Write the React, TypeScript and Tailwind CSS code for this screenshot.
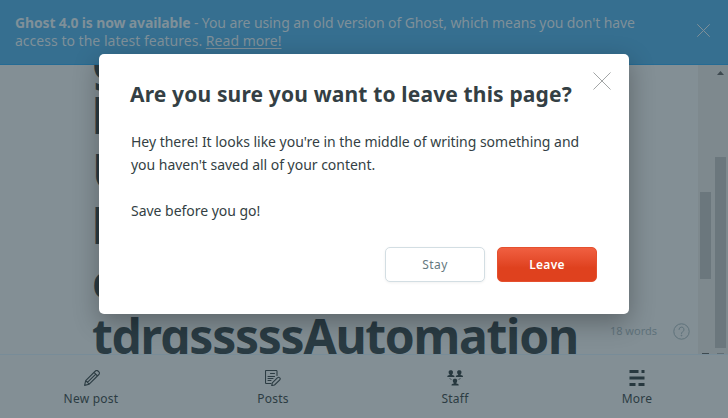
import React from 'react';

const Cross = ({ size, color }: { size: number; color: string }) => (
  <svg width={size} height={size} viewBox="0 0 24 24" fill="none" stroke={color} strokeWidth={24 / size} strokeLinecap="round">
    <path d="M1 1l22 22M23 1L1 23" />
  </svg>
);

const Pencil = () => (
  <svg width="16" height="16" viewBox="0 0 16 16" fill="none" stroke="#2c3c43" strokeWidth="1.1" strokeLinejoin="round" className="translate-x-px">
    <path d="M1.7 10.6L11.4 1a1.8 1.8 0 0 1 2.6 0l.9.9a1.8 1.8 0 0 1 0 2.6L5.2 14.2.6 15.4zM1.7 10.6l3.5 3.6M10 2.4L13.5 6M3.4 12.4L11.8 4.1" />
  </svg>
);

const PostsIcon = () => (
  <svg width="16" height="16" viewBox="0 0 16 16" fill="none" stroke="#2c3c43" strokeWidth="1.1" strokeLinecap="round" strokeLinejoin="round">
    <path d="M6 13.5H1.2a.7.7 0 0 1-.7-.7V1.2a.7.7 0 0 1 .7-.7h10.1a.7.7 0 0 1 .7.7v4.3M5.5 3.5h4M3 6.5h6.5M3 8.5h5M3 10.5h3" />
    <path d="M7.3 12.8l5.3-5.2a1.3 1.3 0 0 1 1.9 0l.3.3a1.3 1.3 0 0 1 0 1.9l-5.3 5.2-2.8.6z" />
  </svg>
);

const Person = ({ x, y }: { x: number; y: number }) => (
  <g transform={`translate(${x} ${y})`}>
    <path d="M1.1 1.9C1.100.6 2 0 3.300 0s2.200.6 2.200 1.900c0 1-.3 1.700-.9 2.200v.6l1.800.6q.6.3.6 1.400H-.2q0-1.100.6-1.400l1.700-.6V4.100c-.7-.5-1-1.200-1-2.200z" />
  </g>
);

const StaffIcon = () => (
  <svg width="16" height="16" viewBox="0 0 16 16" fill="#27383f">
    <Person x={0.5} y={0.3} />
    <Person x={9} y={0.3} />
    <Person x={4.7} y={8.8} />
    <path d="M2.500 8l2 2M13.500 8l-2 2" stroke="#33434a" strokeWidth=".8" />
  </svg>
);

const MoreIcon = () => (
  <svg width="16" height="16" viewBox="0 0 16 16" fill="#27383f">
    <path d="M.5 0h9v3h-9zM12.500 0h3v3h-3zM.5 6.500h15v3H.5zM.5 13h6v3h-6zM9.500 13h6v3h-6z" />
  </svg>
);

const Tab = ({ label, children }: { label: string; children: React.ReactNode }) => (
  <div className="flex flex-1 flex-col items-center pt-[15px]">
    {children}
    <span className="mt-[3px] text-[12px] leading-5 tracking-[0.02em] text-[#2c3c43]">{label}</span>
  </div>
);

const titleLines = ['g', 'h', 'U', 'h', 'c', 'tdrgsssssAutomation'];

export default function App() {
  return (
    <div className="relative flex h-[418px] w-[728px] flex-col overflow-hidden bg-[#838f95] font-['Noto_Sans',sans-serif]">
      <header className="flex h-[65px] shrink-0 items-start border-b border-[#256b94] bg-[#366f90] pl-[15px] pr-[18px] pt-[14px] text-[#7f9099]">
        <p className="flex-1 whitespace-nowrap text-[14px] leading-[18px]">
          <b className="font-bold tracking-[-0.15px]">Ghost 4.0 is now available</b>
          <span className="tracking-[-0.1px]"> - You are using an old version of Ghost, which means you don't have</span>
          <br />
          <span className="tracking-[0.02px]">access to the latest features. <a className="underline underline-offset-2">Read more!</a></span>
        </p>
        <span className="mt-[10px]"><Cross size={13} color="#7f9099" /></span>
      </header>

      <main className="flex h-[289px] shrink-0 overflow-hidden">
        <div className="w-[600px] pl-[92px]">
          <div className="-mt-[32px] whitespace-nowrap text-[48px] font-bold leading-[55px] tracking-[-1.28px] text-[#2a3b43]">
            {titleLines.map((line, i) => (
              <div key={i}>{line}</div>
            ))}
          </div>
        </div>
        <div className="flex w-[98px] items-end justify-end gap-[15px] pb-[14px] pr-2 text-[#5f727b]">
          <span className="mr-px whitespace-nowrap text-[11px] leading-[18px]">18 words</span>
          <svg width="17" height="17" viewBox="0 0 17 17" fill="none" stroke="#5f727b" className="shrink-0">
            <circle cx="8.5" cy="8.5" r="7.7" />
            <path d="M6 6.500a2.500 2.500 0 1 1 3.600 2.300c-.8.4-1.100.8-1.100 1.700" strokeLinecap="round" />
            <circle cx="8.500" cy="12.500" r=".4" />
          </svg>
        </div>
        <div className="flex w-[15px] flex-col items-center bg-[#7e898e]">
          <div className="mt-[127px] h-[87px] w-[11px] bg-[#6b777d]" />
          <div className="mt-auto h-px w-[7px] bg-[#3e4a50]" />
        </div>
        <div className="flex w-[15px] flex-col items-center bg-[#7e898e]">
          <svg width="7" height="4" viewBox="0 0 7 4" className="mt-[6px]" fill="#3e4a50"><path d="M0 4L3.500 0 7 4z" /></svg>
          <div className="mt-[82px] h-[191px] w-[11px] bg-[#6b777d]" />
          <div className="mt-auto h-px w-[7px] bg-[#626e74]" />
        </div>
      </main>

      <nav className="flex flex-1 border-t border-[#788c98]">
        <Tab label="New post"><Pencil /></Tab>
        <Tab label="Posts"><PostsIcon /></Tab>
        <Tab label="Staff"><StaffIcon /></Tab>
        <Tab label="More"><MoreIcon /></Tab>
      </nav>

      <section className="absolute left-[99px] top-[54px] h-[260px] w-[530px] rounded-[5px] bg-white px-8 pt-[25px] shadow-[0_8px_26px_rgba(0,0,0,0.3)]">
        <button className="absolute right-[18px] top-[18px]"><Cross size={18} color="#a2a5a6" /></button>
        <h1 className="-ml-px whitespace-nowrap text-[21px] font-bold leading-[30px] tracking-[0.15px] text-[#343f44]">Are you sure you want to leave this page?</h1>
        <div className="mt-[21px] whitespace-nowrap text-[14px] leading-[23px] tracking-[-0.025px] text-[#343f44]">
          <p>Hey there! It looks like you're in the middle of writing something and<br />you haven't saved all of your content.</p>
          <p className="mt-[23px]">Save before you go!</p>
        </div>
        <div className="mt-[25px] flex justify-end gap-3">
          <button className="h-[35px] w-[100px] rounded-[5px] border border-[#d3dee3] bg-white text-[12px] tracking-[0.4px] text-[#657980] shadow-[0_1px_3px_rgba(0,0,0,0.06)]">Stay</button>
          <button className="h-[35px] w-[100px] rounded-[5px] border border-[#e5502e] bg-linear-to-b from-[#f05f40] from-0% via-[#df411e] via-60% to-[#df411e] text-[12px] font-semibold tracking-[0.3px] text-white">Leave</button>
        </div>
      </section>
    </div>
  );
}
